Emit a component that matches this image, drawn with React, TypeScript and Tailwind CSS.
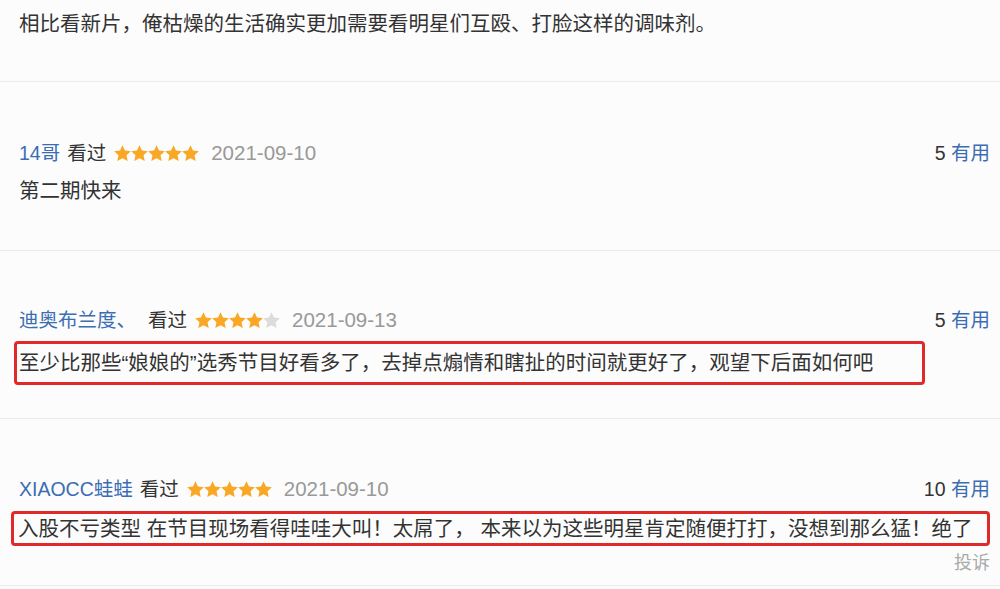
const font = { fontFamily: '"Liberation Sans","Noto Sans CJK SC",sans-serif' };

function Stars({ n }: { n: number }) {
  return (
    <span className="flex items-center">
      {[0, 1, 2, 3, 4].map((i) => (
        <svg key={i} width="17" height="17" viewBox="1.5 1.5 21 21" className={i < n ? "text-[#f9a825]" : "text-[#dcdcdc]"}>
          <path fill="currentColor" d="M12 1.8l3.1 6.6 7.2.9-5.3 5 1.4 7.1L12 17.9l-6.4 3.5 1.4-7.1-5.3-5 7.2-.9z" />
        </svg>
      ))}
    </span>
  );
}

function Header({ name, stars, date, useful, gap }: { name: string; stars: number; date: string; useful: number; gap: string }) {
  return (
    <div className="flex items-center h-7 text-[19.5px] leading-7">
      <span className="text-[#3b6db3]">{name}</span>
      <span className={`text-[#333] ${gap}`}>看过</span>
      <span className="ml-[8px]"><Stars n={stars} /></span>
      <span className="ml-3 text-[20.5px] text-[#999]">{date}</span>
      <span className="ml-auto text-[#333]">{useful} <span className="text-[#3b6db3]">有用</span></span>
    </div>
  );
}

export default function App() {
  return (
    <div className="w-[1000px] h-[589px] bg-[#fcfcfc] overflow-hidden" style={font}>
      {/* top comment tail */}
      <div className="h-[82px] border-b border-[#ebebeb] pl-[19px] pr-[10px] pt-[10px]">
        <p className="text-[20.5px] leading-7 text-[#333]">相比看新片，俺枯燥的生活确实更加需要看明星们互殴、打脸这样的调味剂。</p>
      </div>

      <div className="h-[169px] border-b border-[#ebebeb] pl-[19px] pr-[10px] pt-[57px]">
        <Header name="14哥" stars={5} date="2021-09-10" useful={5} gap="ml-[7px]" />
        <p className="mt-[10px] text-[20.5px] leading-7 text-[#333]">第二期快来</p>
      </div>

      <div className="h-[168px] border-b border-[#ebebeb] pl-[19px] pr-[10px] pt-[55px]">
        <Header name="迪奥布兰度、" stars={4} date="2021-09-13" useful={5} gap="ml-[12px]" />
        <div className="mt-[7px] -ml-[5px] w-[911px] h-[44px] border-[3px] border-[#e02a2a] rounded-[4px] flex items-center pl-[2px]">
          <p className="text-[20.5px] leading-7 text-[#333] whitespace-nowrap">至少比那些“娘娘的”选秀节目好看多了，去掉点煽情和瞎扯的时间就更好了，观望下后面如何吧</p>
        </div>
      </div>

      <div className="h-[167px] border-b border-[#ebebeb] pl-[19px] pr-[10px] pt-[56px]">
        <Header name="XIAOCC蛙蛙" stars={5} date="2021-09-10" useful={10} gap="ml-[7px]" />
        <div className="mt-[8px] -ml-[8px] w-[979px] h-[35px] border-[3px] border-[#e02a2a] rounded-[4px] flex items-center pl-[4px]">
          <p className="text-[20.5px] leading-7 text-[#333] whitespace-nowrap">入股不亏类型 在节目现场看得哇哇大叫！太屌了， 本来以为这些明星肯定随便打打，没想到那么猛！绝了</p>
        </div>
        <div className="mt-[5px] text-right text-[18px] leading-6 text-[#aaa]">投诉</div>
      </div>
    </div>
  );
}
